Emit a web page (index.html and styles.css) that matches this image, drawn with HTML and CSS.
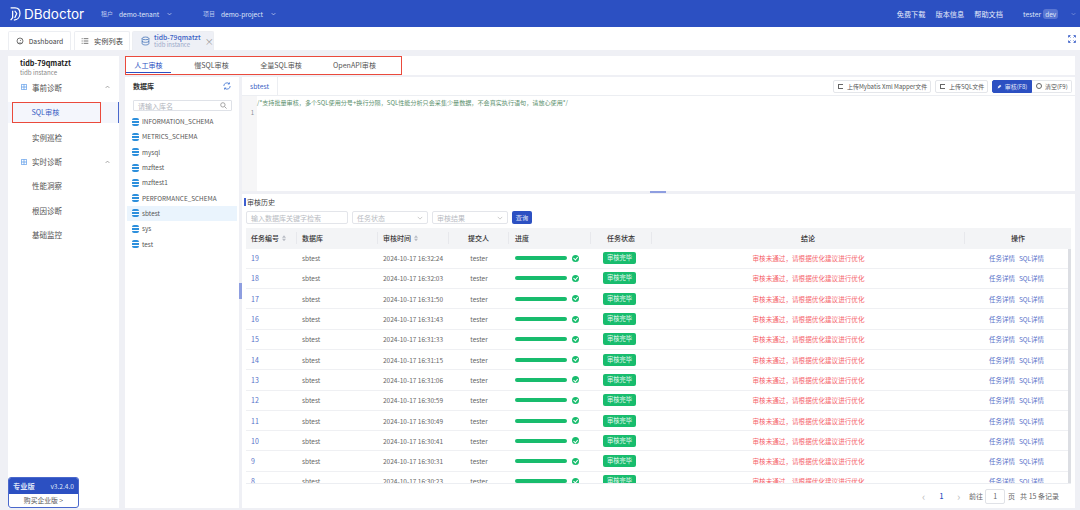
FILE: index.html
```html
<!DOCTYPE html>
<html lang="zh">
<head>
<meta charset="utf-8">
<title>DBdoctor</title>
<link rel="stylesheet" href="styles.css">
</head>
<body>
<header class="topbar">
  <div class="logo">
    <svg class="logo-mark" viewBox="0 0 16 18"><path d="M2 1.500h5.500c3.600 0 6 2.800 6 6.800 0 4.600-3 8-7.500 8.200M4.500 5v8.500L2 16.500M7 5l2.500 3.500L7 14" fill="none" stroke="#fff" stroke-width="1.500"/></svg>
    <span>DBdoctor</span>
  </div>
  <div class="crumb crumb-a"><small>租户</small><span>demo-tenant</span><svg class="chev" viewBox="0 0 8 5"><path d="M1 1l3 3 3-3" fill="none" stroke="currentColor"/></svg></div>
  <div class="crumb crumb-b"><small>项目</small><span>demo-project</span><svg class="chev" viewBox="0 0 8 5"><path d="M1 1l3 3 3-3" fill="none" stroke="currentColor"/></svg></div>
  <nav class="toplinks"><a>免费下载</a><a>版本信息</a><a>帮助文档</a></nav>
  <div class="user"><span>tester</span><b>dev</b><svg class="chev dim" viewBox="0 0 8 5"><path d="M1 1l3 3 3-3" fill="none" stroke="currentColor"/></svg></div>
</header>

<div class="tabbar">
  <div class="ptab tab-dash"><svg class="ticon" viewBox="0 0 12 12"><circle cx="6" cy="6" r="4.500" fill="none" stroke="#444" stroke-width="1.100"/><path d="M6 6l1.800-2M3.500 9h5" stroke="#444"/></svg>Dashboard</div>
  <div class="ptab tab-list"><svg class="ticon" viewBox="0 0 12 12"><path d="M1 2.500h1.500M1 6h1.500M1 9.500h1.500M4 2.500h7M4 6h7M4 9.500h7" stroke="#444" stroke-width="1.100"/></svg>实例列表</div>
  <div class="ptab tab-active">
    <svg class="ticon big" viewBox="0 0 12 12"><ellipse cx="6" cy="2.500" rx="4.500" ry="1.800" fill="none" stroke="#3f6fb5"/><path d="M1.500 2.500v7c0 1 2 1.800 4.500 1.800s4.500-.8 4.500-1.800v-7M1.500 6c0 1 2 1.800 4.500 1.800s4.500-.8 4.500-1.800" fill="none" stroke="#3f6fb5"/></svg>
    <div class="tab-two"><strong>tidb-79qmatzt</strong><em>tidb instance</em></div>
    <span class="close">×</span>
  </div>
  <svg class="fullscreen" viewBox="0 0 8 8"><path d="M.5 2.500v-2h2M5.500.5h2v2M7.500 5.500v2h-2M2.500 7.500h-2v-2M1 1l1.500 1.500M7 1L5.500 2.500M7 7L5.500 5.500M1 7l1.500-1.500" fill="none" stroke="#2f55c4" stroke-width=".8"/></svg>
</div>

<main class="workspace">
  <aside class="sidebar">
    <div class="inst"><strong>tidb-79qmatzt</strong><small>tidb instance</small></div>
    <div class="menu-group"><svg class="grid-ic" viewBox="0 0 8 8"><path d="M.5.500h7v7h-7zM4 .5v7M.5 4h7" fill="none" stroke="#5c9be8"/></svg><span>事前诊断</span><svg class="chev up" viewBox="0 0 8 5"><path d="M1 4l3-3 3 3" fill="none" stroke="#777"/></svg></div>
    <div class="menu-item active"><span class="annot">SQL审核</span></div>
    <div class="menu-item">实例巡检</div>
    <div class="menu-group"><svg class="grid-ic" viewBox="0 0 8 8"><path d="M.5.500h7v7h-7zM4 .5v7M.5 4h7" fill="none" stroke="#5c9be8"/></svg><span>实时诊断</span><svg class="chev up" viewBox="0 0 8 5"><path d="M1 4l3-3 3 3" fill="none" stroke="#777"/></svg></div>
    <div class="menu-item">性能洞察</div>
    <div class="menu-item">根因诊断</div>
    <div class="menu-item">基础监控</div>
    <div class="edition">
      <div class="ed-top"><b>专业版</b><span>v3.2.4.0</span></div>
      <div class="ed-bottom">购买企业版 &gt;</div>
    </div>
  </aside>

  <section class="content">
    <div class="subtabs">
      <div class="subtab-box">
        <a class="subtab current">人工审核</a>
        <a class="subtab">慢SQL审核</a>
        <a class="subtab">全量SQL审核</a>
        <a class="subtab">OpenAPI审核</a>
      </div>
    </div>
    <div class="panes">
      <div class="dbpane">
        <div class="db-head"><b>数据库</b><svg class="refresh" viewBox="0 0 10 10"><path d="M1 5a4 4 0 0 1 6.800-2.800M9 5a4 4 0 0 1-6.800 2.800M8 .5v2H6M2 9.500v-2h2" fill="none" stroke="#3a70d0"/></svg></div>
        <div class="db-search"><span>请输入库名</span><svg class="mag" viewBox="0 0 8 8"><circle cx="3.300" cy="3.300" r="2.500" fill="none" stroke="#999"/><path d="M5.200 5.200L7.500 7.500" stroke="#999"/></svg></div>
        <ul class="dblist">
          <li><i class="dbi"></i>INFORMATION_SCHEMA</li>
          <li><i class="dbi"></i>METRICS_SCHEMA</li>
          <li><i class="dbi"></i>mysql</li>
          <li><i class="dbi"></i>mzftest</li>
          <li><i class="dbi"></i>mzftest1</li>
          <li><i class="dbi"></i>PERFORMANCE_SCHEMA</li>
          <li class="sel"><i class="dbi"></i>sbtest</li>
          <li><i class="dbi"></i>sys</li>
          <li><i class="dbi"></i>test</li>
        </ul>
      </div>
      <div class="divider"><span class="handle-v"></span></div>
      <div class="rightpane">
        <div class="editor">
          <div class="ed-tabs">
            <span class="ed-tab">sbtest</span>
            <div class="ed-btns">
              <a class="btn b1"><i class="up-ic"></i>上传Mybatis Xml Mapper文件</a>
              <a class="btn b2"><i class="up-ic"></i>上传SQL文件</a>
              <div class="btn-group">
                <a class="btn primary"><svg class="pen" viewBox="0 0 8 8"><path d="M1 7l1-3 3-3 2 2-3 3z" fill="#e4e9f9"/></svg>审核(F8)</a>
                <a class="btn clear"><i class="cl-ic"></i>清空(F9)</a>
              </div>
            </div>
          </div>
          <div class="ed-body">
            <div class="gutter">1</div>
            <div class="code">/*支持批量审核，多个SQL使用分号+换行分隔，SQL性能分析只会采集少量数据，不会真实执行语句，请放心使用*/</div>
          </div>
        </div>
        <div class="splitter"><span class="handle-h"></span></div>
        <div class="history">
          <div class="hist-title">审核历史</div>
          <div class="filters">
            <div class="inp w1">输入数据库关键字检索</div>
            <div class="inp w2">任务状态<svg class="chev gray" viewBox="0 0 8 5"><path d="M1 1l3 3 3-3" fill="none" stroke="currentColor"/></svg></div>
            <div class="inp w3">审核结果<svg class="chev gray" viewBox="0 0 8 5"><path d="M1 1l3 3 3-3" fill="none" stroke="currentColor"/></svg></div>
            <a class="query">查询</a>
          </div>
          <div class="table">
            <div class="thead row">
              <div class="c">任务编号 <i class="sort"></i></div><div class="c">数据库</div><div class="c">审核时间 <i class="sort"></i></div><div class="c mid">提交人</div><div class="c">进度</div><div class="c mid">任务状态</div><div class="c mid">结论</div><div class="c mid">操作</div>
            </div>
            <div class="tbody">
              <div class="row"><div class="c id">19</div><div class="c">sbtest</div><div class="c">2024-10-17 16:32:24</div><div class="c mid">tester</div><div class="c"><span class="bar"></span><span class="ok"></span></div><div class="c mid"><span class="tag">审核完毕</span></div><div class="c mid red">审核未通过，请根据优化建议进行优化</div><div class="c mid ops"><a>任务详情</a><a>SQL详情</a></div></div>
              <div class="row"><div class="c id">18</div><div class="c">sbtest</div><div class="c">2024-10-17 16:32:03</div><div class="c mid">tester</div><div class="c"><span class="bar"></span><span class="ok"></span></div><div class="c mid"><span class="tag">审核完毕</span></div><div class="c mid red">审核未通过，请根据优化建议进行优化</div><div class="c mid ops"><a>任务详情</a><a>SQL详情</a></div></div>
              <div class="row"><div class="c id">17</div><div class="c">sbtest</div><div class="c">2024-10-17 16:31:50</div><div class="c mid">tester</div><div class="c"><span class="bar"></span><span class="ok"></span></div><div class="c mid"><span class="tag">审核完毕</span></div><div class="c mid red">审核未通过，请根据优化建议进行优化</div><div class="c mid ops"><a>任务详情</a><a>SQL详情</a></div></div>
              <div class="row"><div class="c id">16</div><div class="c">sbtest</div><div class="c">2024-10-17 16:31:43</div><div class="c mid">tester</div><div class="c"><span class="bar"></span><span class="ok"></span></div><div class="c mid"><span class="tag">审核完毕</span></div><div class="c mid red">审核未通过，请根据优化建议进行优化</div><div class="c mid ops"><a>任务详情</a><a>SQL详情</a></div></div>
              <div class="row"><div class="c id">15</div><div class="c">sbtest</div><div class="c">2024-10-17 16:31:33</div><div class="c mid">tester</div><div class="c"><span class="bar"></span><span class="ok"></span></div><div class="c mid"><span class="tag">审核完毕</span></div><div class="c mid red">审核未通过，请根据优化建议进行优化</div><div class="c mid ops"><a>任务详情</a><a>SQL详情</a></div></div>
              <div class="row"><div class="c id">14</div><div class="c">sbtest</div><div class="c">2024-10-17 16:31:15</div><div class="c mid">tester</div><div class="c"><span class="bar"></span><span class="ok"></span></div><div class="c mid"><span class="tag">审核完毕</span></div><div class="c mid red">审核未通过，请根据优化建议进行优化</div><div class="c mid ops"><a>任务详情</a><a>SQL详情</a></div></div>
              <div class="row"><div class="c id">13</div><div class="c">sbtest</div><div class="c">2024-10-17 16:31:06</div><div class="c mid">tester</div><div class="c"><span class="bar"></span><span class="ok"></span></div><div class="c mid"><span class="tag">审核完毕</span></div><div class="c mid red">审核未通过，请根据优化建议进行优化</div><div class="c mid ops"><a>任务详情</a><a>SQL详情</a></div></div>
              <div class="row"><div class="c id">12</div><div class="c">sbtest</div><div class="c">2024-10-17 16:30:59</div><div class="c mid">tester</div><div class="c"><span class="bar"></span><span class="ok"></span></div><div class="c mid"><span class="tag">审核完毕</span></div><div class="c mid red">审核未通过，请根据优化建议进行优化</div><div class="c mid ops"><a>任务详情</a><a>SQL详情</a></div></div>
              <div class="row"><div class="c id">11</div><div class="c">sbtest</div><div class="c">2024-10-17 16:30:49</div><div class="c mid">tester</div><div class="c"><span class="bar"></span><span class="ok"></span></div><div class="c mid"><span class="tag">审核完毕</span></div><div class="c mid red">审核未通过，请根据优化建议进行优化</div><div class="c mid ops"><a>任务详情</a><a>SQL详情</a></div></div>
              <div class="row"><div class="c id">10</div><div class="c">sbtest</div><div class="c">2024-10-17 16:30:41</div><div class="c mid">tester</div><div class="c"><span class="bar"></span><span class="ok"></span></div><div class="c mid"><span class="tag">审核完毕</span></div><div class="c mid red">审核未通过，请根据优化建议进行优化</div><div class="c mid ops"><a>任务详情</a><a>SQL详情</a></div></div>
              <div class="row"><div class="c id">9</div><div class="c">sbtest</div><div class="c">2024-10-17 16:30:31</div><div class="c mid">tester</div><div class="c"><span class="bar"></span><span class="ok"></span></div><div class="c mid"><span class="tag">审核完毕</span></div><div class="c mid red">审核未通过，请根据优化建议进行优化</div><div class="c mid ops"><a>任务详情</a><a>SQL详情</a></div></div>
              <div class="row"><div class="c id">8</div><div class="c">sbtest</div><div class="c">2024-10-17 16:30:23</div><div class="c mid">tester</div><div class="c"><span class="bar"></span><span class="ok"></span></div><div class="c mid"><span class="tag">审核完毕</span></div><div class="c mid red">审核未通过，请根据优化建议进行优化</div><div class="c mid ops"><a>任务详情</a><a>SQL详情</a></div></div>
            </div>
          </div>
          <div class="pager">
            <span class="pg-arrow">‹</span><b>1</b><span class="pg-arrow">›</span>
            <span class="pg-go">前往</span><span class="pg-input">1</span><span class="pg-unit">页</span><span class="pg-total">共 15 条记录</span>
          </div>
        </div>
      </div>
    </div>
  </section>
</main>
</body>
</html>
```
FILE: styles.css
```css
* { box-sizing: border-box; }
html, body { margin: 0; height: 510px; overflow: hidden; }
body {
  width: 1080px;
  background: #eff0f5;
  font-family: "Noto Sans CJK SC", "Noto Sans", sans-serif;
  font-size: 7px;
  color: #555;
  display: flex;
  flex-direction: column;
}
a { color: inherit; text-decoration: none; }
svg { display: block; flex: none; }
ul { list-style: none; margin: 0; padding: 0; }

/* top bar */
.topbar {
  height: 27px;
  flex: none;
  background: #2c50c2;
  color: #dfe5f7;
  display: flex;
  align-items: center;
  padding-left: 9px;
}
.logo { display: flex; align-items: center; gap: 2px; width: 92px; color: #fff; font: 400 13.5px "Inter", sans-serif; }
.logo-mark { width: 13px; height: 16px; }
.crumb { display: flex; align-items: center; gap: 6px; font-size: 6.6px; }
.crumb small { font-size: 6px; color: #b9c6ee; }
.crumb-a { width: 102px; }
.crumb-b { width: 200px; }
.chev { width: 5px; height: 4px; margin-left: 2px; }
.toplinks { margin-left: auto; display: flex; gap: 10px; font-size: 7.2px; color: #e6ebfa; }
.user { display: flex; align-items: center; margin-left: 20px; gap: 2px; width: 57px; font-size: 6.8px; }
.user b { font-weight: 400; background: #5a76d2; border-radius: 3px; padding: 0 2px; line-height: 10px; font-size: 6.5px; }
.chev.dim { margin-left: 11px; color: #8ea2e0; }

/* tabs */
.tabbar {
  height: 23px;
  flex: none;
  background: #fff;
  display: flex;
  align-items: flex-end;
  gap: 3px;
  padding: 0 4px 0 8px;
}
.ptab {
  height: 19px;
  display: flex;
  align-items: center;
  justify-content: center;
  gap: 5px;
  border: 1px solid #eceef2;
  border-bottom: 0;
  border-radius: 2px 2px 0 0;
  font-size: 6.8px;
  color: #444;
}
.tab-dash { width: 63px; }
.tab-list { width: 56px; font-size: 7.2px; }
.tab-active { width: 82px; background: #eef0f6; margin-left: -1px; gap: 4px; justify-content: flex-start; padding-left: 8px; }
.ticon { width: 8px; height: 8px; }
.ticon.big { width: 9px; height: 10px; }
.tab-two { display: flex; flex-direction: column; line-height: 8px; white-space: nowrap; }
.tab-two strong { font-weight: 500; color: #3a5fc5; font-size: 6.8px; }
.tab-two em { font-style: normal; color: #9aa8c8; font-size: 6px; }
.close { color: #999; font-size: 9px; }
.fullscreen { width: 8px; height: 8px; margin-left: auto; align-self: center; }

/* workspace */
.workspace {
  flex: 1;
  min-height: 0;
  display: flex;
  gap: 6px;
  padding: 6px 5px 2px 8px;
}
.sidebar {
  width: 111px;
  flex: none;
  background: #fff;
  display: flex;
  flex-direction: column;
  color: #555;
}
.inst { padding: 3px 0 0 12px; display: flex; flex-direction: column; line-height: 9px; margin-bottom: -2px; }
.inst strong { color: #222; font-size: 7.2px; font-weight: 700; }
.inst small { font-size: 6.2px; color: #888; }
.menu-group { height: 24px; flex: none; display: flex; align-items: center; padding-left: 13px; font-size: 7.5px; color: #555; }
.menu-group span { margin-left: 5px; flex: 1; }
.grid-ic { width: 6px; height: 6px; }
.chev.up { margin: 0 9px 0 0; }
.menu-item { height: 24.5px; flex: none; display: flex; align-items: center; padding-left: 24px; font-size: 7.5px; }
.menu-item.active { color: #3a5fc5; border-right: 1px solid #4a68cc; background: #f4f6fc; height: 21px; margin: 3px 0 2px; padding-left: 4px; }
.annot { width: 89px; height: 21px; border: 1.5px solid #ea4a3c; padding-left: 18.5px; line-height: 18px; font-size: 7.2px; }
.edition {
  margin-top: auto;
  width: 71px;
  height: 31px;
  border: 1px solid #4a68cc;
  border-radius: 3px;
  overflow: hidden;
  background: #fff;
}
.ed-top { height: 16px; background: #2c50c2; display: flex; align-items: center; justify-content: space-between; padding: 0 4px; color: #dfe5f7; }
.ed-top b { font-size: 7.2px; }
.ed-top span { font-size: 6.6px; }
.ed-bottom { height: 14px; line-height: 13px; text-align: center; font-size: 6.8px; color: #555; }

/* content */
.content { flex: 1; min-width: 0; display: flex; flex-direction: column; }
.subtabs { height: 19px; flex: none; background: #fff; }
.subtab-box {
  width: 277px;
  height: 19px;
  border: 1.5px solid #ea4a3c;
  display: flex;
  font-size: 7.1px;
  color: #555;
}
.subtab { display: flex; align-items: center; justify-content: center; height: 16px; }
.subtab:nth-child(1) { width: 45px; color: #2c50c2; border-bottom: 1.5px solid #2c50c2; }
.subtab:nth-child(2) { width: 58px; margin-left: 11.5px; }
.subtab:nth-child(3) { width: 62px; margin-left: 9.5px; }
.subtab:nth-child(4) { width: 66px; margin-left: 9.5px; }
.panes { flex: 1; min-height: 0; display: flex; margin-top: 2px; }
.dbpane { width: 114px; flex: none; background: #fff; }
.db-head { height: 18px; display: flex; align-items: center; justify-content: space-between; padding: 0 8px 0 8px; color: #333; }
.db-head b { font-size: 7px; }
.refresh { width: 8px; height: 8px; }
.db-search { margin: 5px 7px 0 8px; height: 11px; border: 1px solid #dfe2e8; border-radius: 1px; display: flex; align-items: center; justify-content: space-between; padding: 0 4px; color: #b0b4bc; font-size: 7px; }
.mag { width: 7px; height: 7px; }
.dblist { margin-top: 3px; padding: 0 2px; }
.dblist li { height: 15.3px; display: flex; align-items: center; padding-left: 5px; color: #555; font-size: 6.4px; gap: 3px; }
.dblist li.sel { background: #eaf4fd; }
.dbi { width: 7px; height: 8px; border-radius: 2px; flex: none; background: linear-gradient(#2d8fdc 0 2px, #fff 2px 3px, #2d8fdc 3px 5px, #fff 5px 6px, #2d8fdc 6px); }

.divider { width: 3px; flex: none; position: relative; }
.handle-v { position: absolute; left: 0; top: 206px; width: 3px; height: 16px; background: #8e9ee0; }
.rightpane { flex: 1; min-width: 0; display: flex; flex-direction: column; }
.editor { height: 114px; flex: none; background: #fff; display: flex; flex-direction: column; }
.ed-tabs { height: 19px; flex: none; display: flex; align-items: center; justify-content: space-between; border-bottom: 1px solid #eceef2; padding-right: 3px; }
.ed-tab { width: 36px; height: 19px; line-height: 19px; text-align: center; color: #3a5fc5; font-size: 6.8px; border-right: 1px solid #eceef2; }
.ed-btns { display: flex; align-items: center; gap: 4px; }
.btn { height: 13px; display: flex; align-items: center; gap: 4px; padding: 0 4px; border: 1px solid #e4e6ea; border-radius: 2px; font-size: 6px; color: #555; white-space: nowrap; }
.b1 { width: 98px; }
.b2 { width: 53px; }
.btn-group { display: flex; }
.primary { width: 40px; background: #2c50c2; border-color: #2c50c2; color: #e4e9f9; border-radius: 2px 0 0 2px; justify-content: center; gap: 3px; }
.pen { width: 5px; height: 5px; }
.clear { width: 40px; border-radius: 0 2px 2px 0; border-left: 0; gap: 3px; }
.up-ic { width: 5px; height: 5px; flex: none; border: 1px solid #666; border-right: 0; }
.cl-ic { width: 6px; height: 6px; flex: none; border: 1px solid #666; border-radius: 50%; }
.ed-body { flex: 1; display: flex; min-height: 0; }
.gutter { width: 15px; flex: none; background: #f6f6f7; text-align: right; padding: 12px 3px 0 0; color: #8a8f96; font-size: 6px; line-height: 10px; }
.code { flex: 1; color: #5b8f6d; font-size: 6.1px; line-height: 10px; padding-top: 2px; white-space: nowrap; }
.splitter { height: 3px; flex: none; position: relative; }
.handle-h { position: absolute; left: 408px; top: 0; width: 16px; height: 2px; background: #8e9ee0; }
.history { flex: 1; min-height: 0; background: #fff; display: flex; flex-direction: column; padding-left: 2px; }
.hist-title { flex: none; height: 8px; line-height: 8px; margin-top: 4px; font-size: 7px; color: #444; border-left: 2px solid #3f5fd0; padding-left: 1px; }
.filters { flex: none; display: flex; align-items: center; gap: 4px; margin: 5px 0 0 2px; height: 13px; }
.inp { height: 13px; border: 1px solid #e3e5ea; border-radius: 2px; padding: 0 4px; color: #b8bbc2; font-size: 7px; display: flex; align-items: center; justify-content: space-between; }
.w1 { width: 102px; }
.w2 { width: 76px; }
.w3 { width: 76px; }
.chev.gray { width: 6px; color: #bbb; }
.query { width: 20px; height: 13px; background: #2c50c2; color: #e4e9f9; border-radius: 2px; font-size: 6.2px; display: flex; align-items: center; justify-content: center; }
.table { flex: 1; min-height: 0; display: flex; flex-direction: column; overflow: hidden; margin: 4px 0 0 2px; border-bottom: 1px solid #eceef2; width: 825px; }
.row { display: grid; grid-template-columns: 51px 81px 71px 60px 82px 61px 313px 106px; align-items: center; height: 20.3px; border-bottom: 1px solid #eff0f3; }
.thead { flex: none; height: 20.5px; background: #f3f4f6; border-bottom: 0; }
.tbody { flex: 1; min-height: 0; overflow: hidden; border-right: 3px solid #dcdee3; width: 825px; }
.tbody .row { width: 822px; grid-template-columns: 51px 81px 71px 60px 82px 61px 313px 103px; }
.c { padding-left: 5px; display: flex; align-items: center; white-space: nowrap; overflow: hidden; font-size: 6.5px; color: #666; height: 100%; }
.c:nth-child(5) { padding-left: 6px; }
.thead .c { color: #333; font-size: 7px; font-weight: 500; border-right: 1px solid #e7e8ec; height: 12px; }
.thead .c:last-child { border-right: 0; }
.mid { justify-content: center; padding-left: 0; }
.id { color: #5671c9; font-size: 7px; }
.sort { width: 4px; height: 6px; margin-left: 3px; background: #b8bcc4; clip-path: polygon(50% 0, 100% 40%, 0 40%, 0 60%, 100% 60%, 50% 100%, 0 60%, 0 40%); }
.bar { width: 52px; height: 4px; border-radius: 2px; background: #18bc6d; flex: none; }
.ok { position: relative; width: 7px; height: 7px; border-radius: 50%; background: #18bc6d; margin-left: 5px; flex: none; }
.ok::after { content: ""; position: absolute; left: 2.3px; top: 1.2px; width: 2px; height: 3.4px; border: solid #fff; border-width: 0 .8px .8px 0; transform: rotate(40deg); }
.tag { background: #18bc6d; color: #e6f8ef; border-radius: 2px; height: 12px; line-height: 12px; width: 33px; text-align: center; font-size: 6.3px; margin-right: 4px; }
.red { color: #f5646c; font-size: 6.6px; }
.ops { gap: 4px; color: #5671c9; }
.ops a { font-size: 6.5px; color: #5671c9; }
.pager { height: 24px; flex: none; display: flex; align-items: center; justify-content: flex-end; padding-right: 16px; font-size: 7px; color: #666; }
.pager b { color: #2c50c2; width: 31px; text-align: center; font-size: 7px; font-weight: 500; }
.pg-arrow { color: #bbb; font-size: 11px; width: 4px; }
.pg-go { margin-left: 8px; }
.pg-input { width: 20px; height: 15px; margin-left: 2px; border: 1px solid #e0e2e7; border-radius: 2px; text-align: center; line-height: 13px; }
.pg-unit { margin-left: 3px; }
.pg-total { margin-left: 5px; }
```
